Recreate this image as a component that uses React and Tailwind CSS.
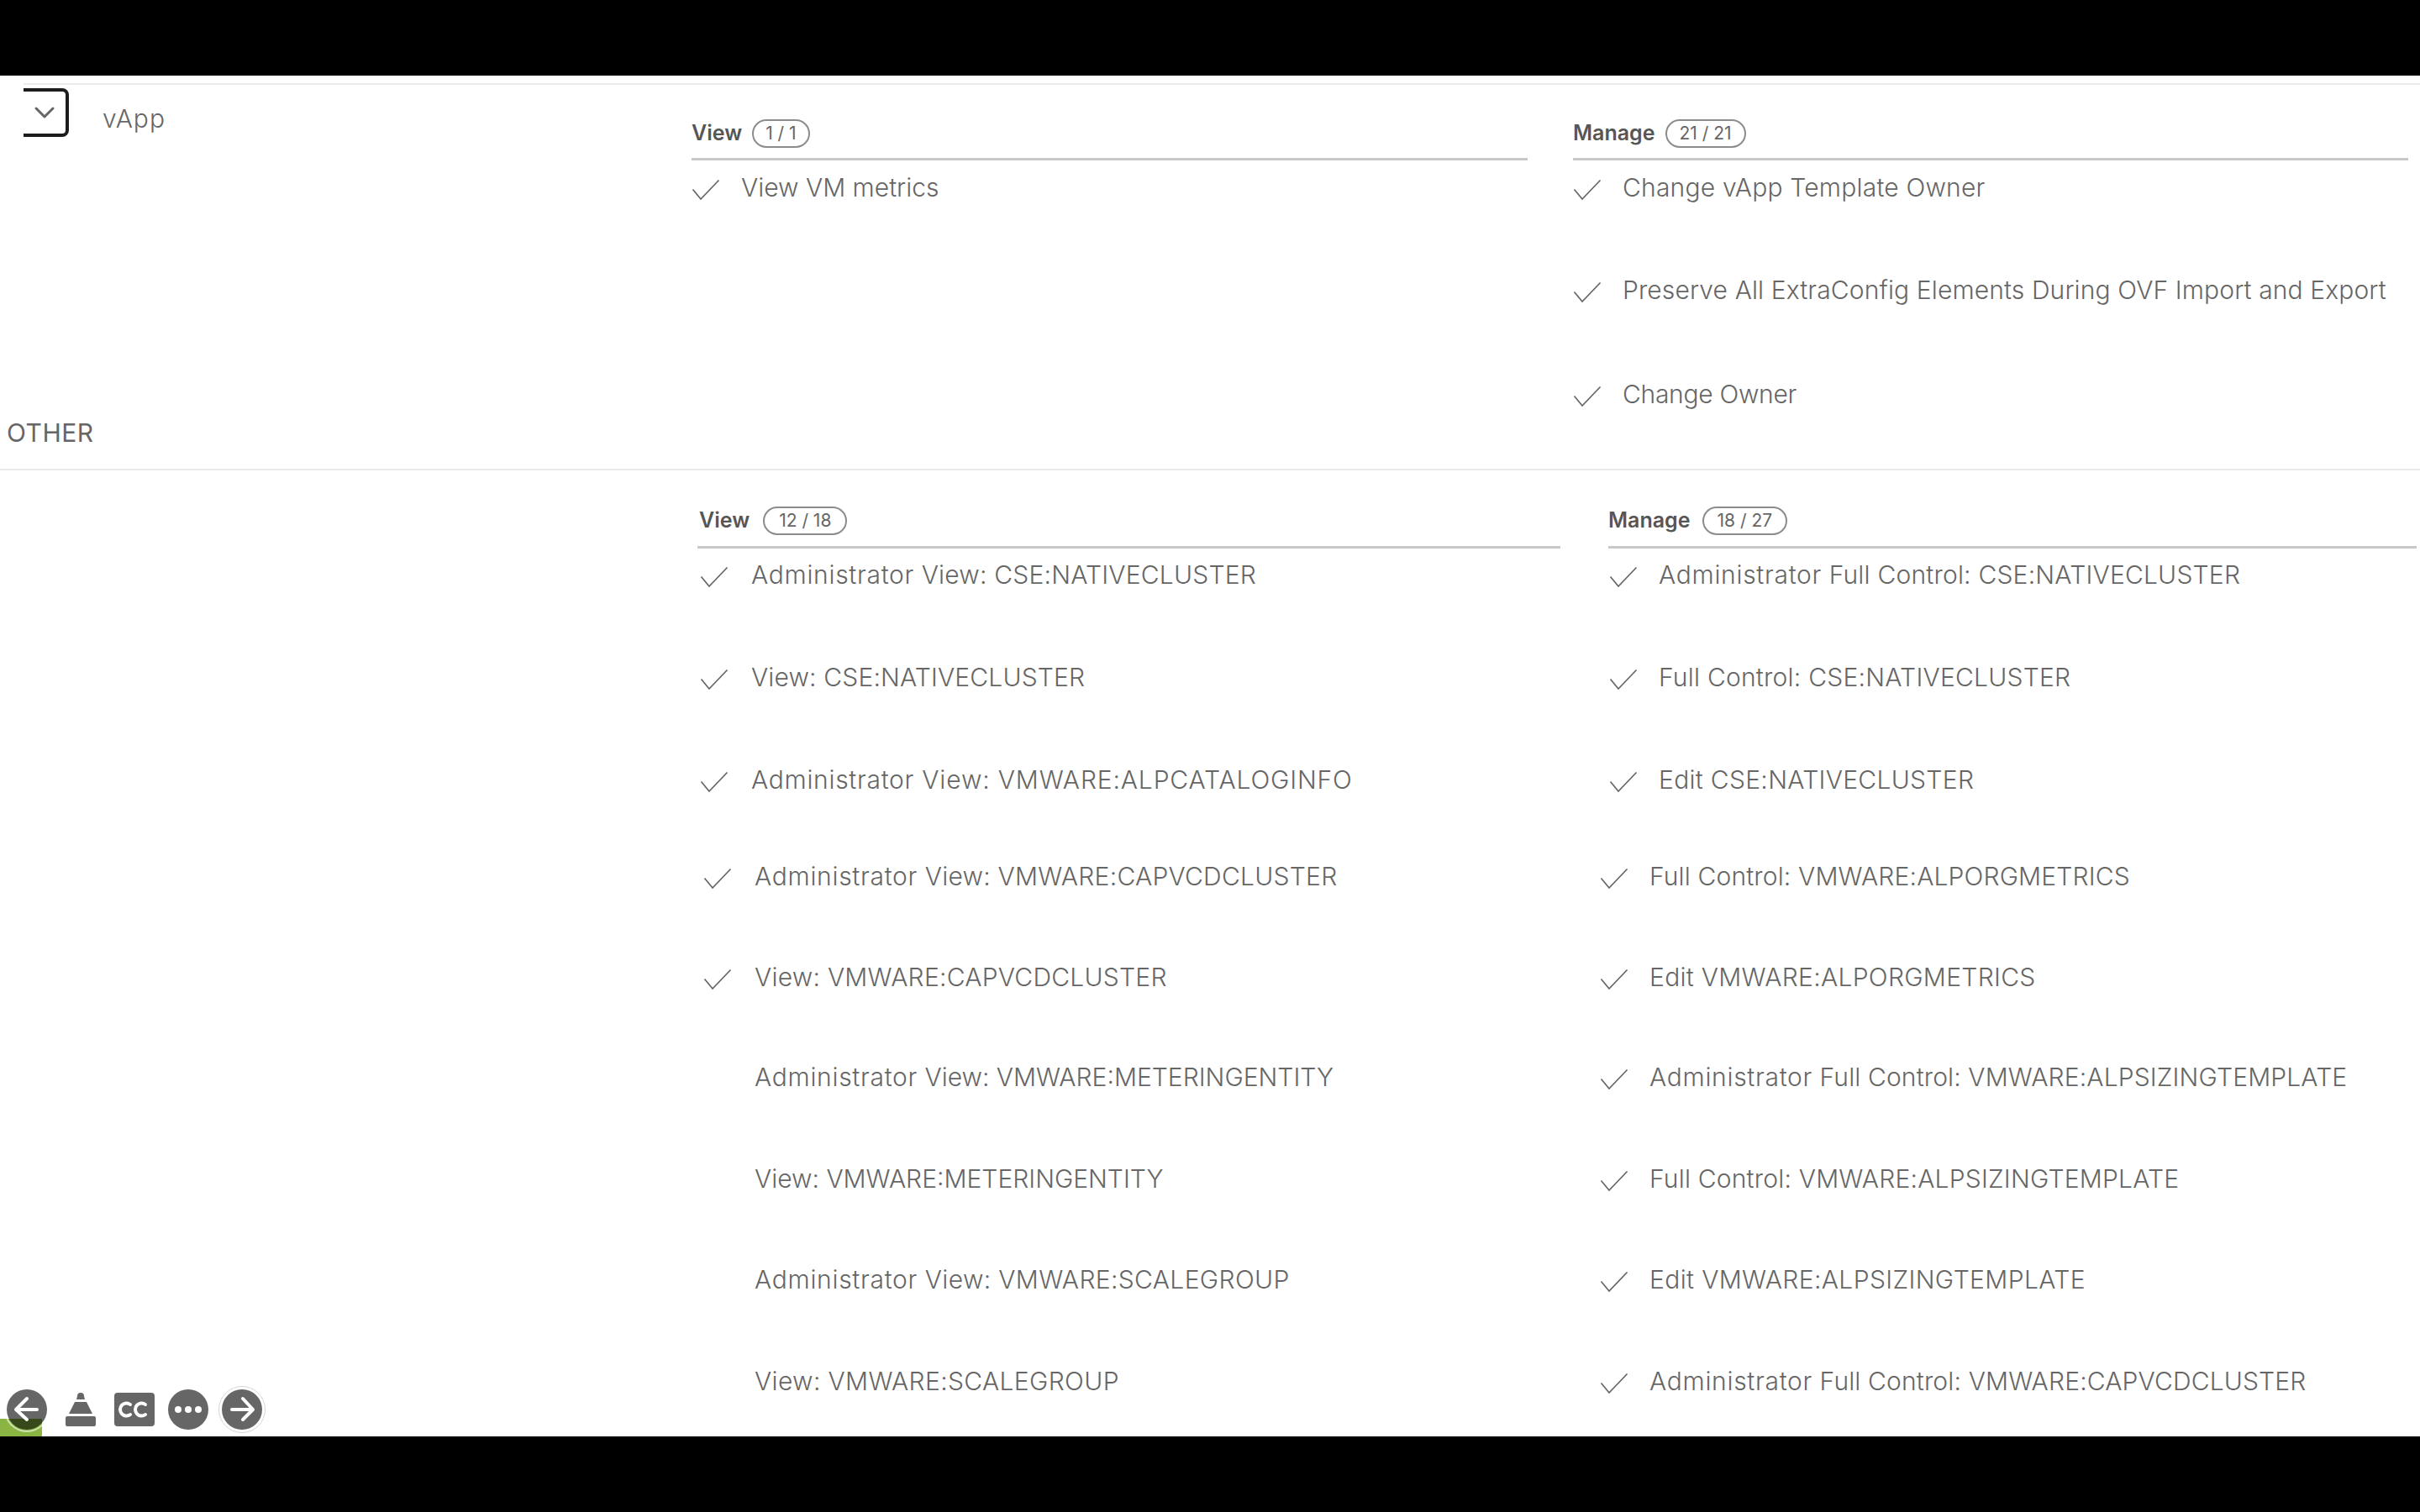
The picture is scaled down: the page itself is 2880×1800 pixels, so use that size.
import { ChevronDown } from "lucide-react";

const FONT = "font-['Inter','Liberation_Sans',sans-serif]";

const vappView = [{ label: "View VM metrics", checked: true, rowClass: "h-[122px]" }];

const vappManage = [
  { label: "Change vApp Template Owner", checked: true, rowClass: "h-[122px] tracking-[0.2px]" },
  { label: "Preserve All ExtraConfig Elements During OVF Import and Export", checked: true, rowClass: "h-[124px] tracking-[0.12px]" },
  { label: "Change Owner", checked: true, rowClass: "h-[60px] tracking-[-0.3px]" },
];

const otherView = [
  { label: "Administrator View: CSE:NATIVECLUSTER", checked: true, rowClass: "h-[122px] tracking-[0.2px]" },
  { label: "View: CSE:NATIVECLUSTER", checked: true, rowClass: "h-[122px] tracking-[0.15px]" },
  { label: "Administrator View: VMWARE:ALPCATALOGINFO", checked: true, rowClass: "h-[115px] tracking-[0.85px]" },
  { label: "Administrator View: VMWARE:CAPVCDCLUSTER", checked: true, rowClass: "h-[120px] pl-[4px] tracking-[0.25px]" },
  { label: "View: VMWARE:CAPVCDCLUSTER", checked: true, rowClass: "h-[119px] pl-[4px] tracking-[0.25px]" },
  { label: "Administrator View: VMWARE:METERINGENTITY", checked: false, rowClass: "h-[121px] pl-[4px]" },
  { label: "View: VMWARE:METERINGENTITY", checked: false, rowClass: "h-[120px] pl-[4px]" },
  { label: "Administrator View: VMWARE:SCALEGROUP", checked: false, rowClass: "h-[121px] pl-[4px] tracking-[0.35px]" },
  { label: "View: VMWARE:SCALEGROUP", checked: false, rowClass: "h-[60px] pl-[4px] tracking-[0.35px]" },
];

const otherManage = [
  { label: "Administrator Full Control: CSE:NATIVECLUSTER", checked: true, rowClass: "h-[122px] pl-[1px] tracking-[0.2px]" },
  { label: "Full Control: CSE:NATIVECLUSTER", checked: true, rowClass: "h-[122px] pl-[1px] tracking-[0.23px]" },
  { label: "Edit CSE:NATIVECLUSTER", checked: true, rowClass: "h-[115px] pl-[1px] tracking-[0.3px]" },
  { label: "Full Control: VMWARE:ALPORGMETRICS", checked: true, rowClass: "h-[120px] -ml-[10px] tracking-[0.15px]" },
  { label: "Edit VMWARE:ALPORGMETRICS", checked: true, rowClass: "h-[119px] -ml-[10px] tracking-[0.3px]" },
  { label: "Administrator Full Control: VMWARE:ALPSIZINGTEMPLATE", checked: true, rowClass: "h-[121px] -ml-[10px] tracking-[0.13px]" },
  { label: "Full Control: VMWARE:ALPSIZINGTEMPLATE", checked: true, rowClass: "h-[120px] -ml-[10px] tracking-[0.2px]" },
  { label: "Edit VMWARE:ALPSIZINGTEMPLATE", checked: true, rowClass: "h-[121px] -ml-[10px] tracking-[0.37px]" },
  { label: "Administrator Full Control: VMWARE:CAPVCDCLUSTER", checked: true, rowClass: "h-[60px] -ml-[10px] tracking-[0.15px]" },
];

const CheckMark = () => (
  <svg width="34" height="26" viewBox="0 0 34 26" className="mt-[6px]">
    <path d="M1.5 12.5L11 24L32.5 1.5" fill="none" stroke="#666666" strokeWidth="1.7" />
  </svg>
);

// "Administrator" runs wider in the reference's face than in Inter
const RowLabel = ({ label }) => {
  if (!label.startsWith("Administrator")) return label;
  return (
    <>
      <span className="tracking-[0.7px]">Administrator</span>
      {label.slice("Administrator".length)}
    </>
  );
};

const PermissionRow = ({ label, checked, rowClass, checkClass }) => (
  <div className={`flex items-start ${rowClass}`}>
    <div className={`h-[60px] shrink-0 flex items-center ${checkClass}`}>{checked && <CheckMark />}</div>
    <span className="text-[30px] leading-[60px] font-light whitespace-nowrap text-[#666666]">
      <RowLabel label={label} />
    </span>
  </div>
);

const PermissionColumn = ({ title, count, rows, className, headerClass, badgeClass = "px-[14px]", listClass = "", checkClass = "w-[59px]" }) => (
  <div className={className}>
    <div className={`flex items-center border-b-[3px] border-[#c8c8c8] ${headerClass}`}>
      <span className="text-[25px] font-semibold text-[#565656]">{title}</span>
      <span className={`h-[34px] flex items-center rounded-full border-2 border-[#8c8c8c] text-[21px] text-[#666666] ${badgeClass}`}>
        {count}
      </span>
    </div>
    <div className={listClass}>
      {rows.map((row) => (
        <PermissionRow key={row.label} checkClass={checkClass} {...row} />
      ))}
    </div>
  </div>
);

const PlayerControls = () => (
  <div className="absolute left-0 bottom-0 w-[340px] h-[60px]">
    {/* green progress stub */}
    <div className="absolute left-0 bottom-0 w-[50px] h-[21px] bg-[#8ab543]" />
    <svg className="absolute left-0 top-0" width="340" height="60" viewBox="0 0 340 60">
      <circle cx="32" cy="28" r="24" fill="#000000" fillOpacity="0.6" />
      <circle cx="32" cy="28" r="26" fill="none" stroke="#ffffff" strokeOpacity="0.6" strokeWidth="2" />
      <path d="M44 28H19M32 15L19 28L32 40" fill="none" stroke="#fff" strokeWidth="4" strokeLinecap="round" strokeLinejoin="round" />

      <path d="M92 12a4 4 0 0 1 8 0l1 4h-10zM89 19h14l7 14h-28z" fill="#666666" />
      <rect x="78" y="36" width="36" height="12" rx="2" fill="#666666" />

      <rect x="136" y="8" width="48" height="40" rx="4" fill="#666666" />
      <path d="M155 22a7.5 7.5 0 1 0 0 12M173 22a7.5 7.5 0 1 0 0 12" fill="none" stroke="#fff" strokeWidth="4" strokeLinecap="round" />

      <circle cx="224" cy="28" r="24" fill="#666666" />
      <circle cx="212" cy="28" r="4" fill="#fff" />
      <circle cx="224" cy="28" r="4" fill="#fff" />
      <circle cx="236" cy="28" r="4" fill="#fff" />

      <circle cx="288" cy="28" r="24" fill="#666666" />
      <circle cx="288" cy="28" r="27.5" fill="none" stroke="#d5d5d5" strokeWidth="1" />
      <path d="M276 28H301M289 15L301 28L289 40" fill="none" stroke="#fff" strokeWidth="4" strokeLinecap="round" strokeLinejoin="round" />
    </svg>
  </div>
);

const App = () => {
  return (
    <div className={`h-screen w-full flex flex-col bg-black overflow-hidden ${FONT}`}>
      <div className="h-[90px] shrink-0 bg-black" />

      <div className="relative h-[1620px] shrink-0 bg-white overflow-hidden">
        {/* vApp group */}
        <div className="mt-[9px] ml-[28px] border-t-2 border-[#ebebeb] h-[405px] flex">
          <div className="w-[795px] shrink-0 flex items-start">
            <div className="mt-[4px] w-[54px] h-[58px] flex items-center justify-center rounded-r-[8px] border-y-4 border-r-4 border-[#1c1c1c]">
              <ChevronDown size={40} strokeWidth={1.8} className="text-[#666666]" />
            </div>
            <span className="ml-[40px] mt-[10px] text-[30px] leading-[60px] font-light tracking-[1px] text-[#666666]">vApp</span>
          </div>
          <PermissionColumn
            title="View"
            count="1 / 1"
            rows={vappView}
            className="w-[995px] shrink-0 pt-[28px]"
            headerClass="h-[62px] gap-[12px]"
            listClass="pt-[2px]"
          />
          <PermissionColumn
            title="Manage"
            count="21 / 21"
            rows={vappManage}
            className="w-[994px] shrink-0 ml-[54px] pt-[28px]"
            headerClass="h-[62px] gap-[12px]"
            badgeClass="px-[15px]"
            listClass="pt-[2px]"
          />
        </div>

        {/* OTHER group */}
        <div className="h-[56px] pl-[8px] flex items-start border-b-2 border-[#ebebeb]">
          <span className="text-[30px] leading-[22px] tracking-[0.5px] text-[#666666]">OTHER</span>
        </div>
        <div className="flex pt-[29px]">
          <PermissionColumn
            title="View"
            count="12 / 18"
            rows={otherView}
            className="w-[1027px] shrink-0 ml-[830px]"
            headerClass="h-[64px] pl-[2px] gap-[16px]"
            badgeClass="px-[17px]"
            listClass="pt-[1px]"
            checkClass="w-[64px] pl-[3px]"
          />
          <PermissionColumn
            title="Manage"
            count="18 / 27"
            rows={otherManage}
            className="w-[962px] shrink-0 ml-[57px]"
            headerClass="h-[64px] gap-[14px]"
            badgeClass="px-[16px]"
            listClass="pt-[1px]"
          />
        </div>

        <PlayerControls />
      </div>
    </div>
  );
};

export default App;
